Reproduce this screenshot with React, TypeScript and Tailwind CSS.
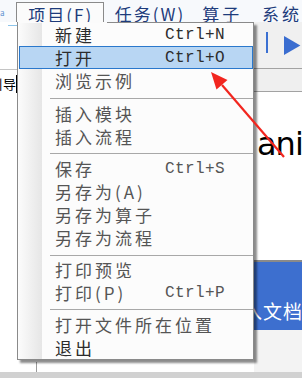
import React from "react";

const CJK = "font-['Noto_Sans_CJK_SC',sans-serif]";

type Item =
  | { kind: "item"; label: string; shortcut?: string; active?: boolean; dark?: boolean }
  | { kind: "sep"; h: number; off: number };

const ITEMS: Item[] = [
  { kind: "item", label: "新建", shortcut: "Ctrl+N", dark: true },
  { kind: "item", label: "打开", shortcut: "Ctrl+O", active: true, dark: true },
  { kind: "item", label: "浏览示例" },
  { kind: "sep", h: 10, off: 6 },
  { kind: "item", label: "插入模块" },
  { kind: "item", label: "插入流程" },
  { kind: "sep", h: 9, off: 5 },
  { kind: "item", label: "保存", shortcut: "Ctrl+S" },
  { kind: "item", label: "另存为(A)" },
  { kind: "item", label: "另存为算子" },
  { kind: "item", label: "另存为流程" },
  { kind: "sep", h: 9, off: 6 },
  { kind: "item", label: "打印预览" },
  { kind: "item", label: "打印(P)", shortcut: "Ctrl+P" },
  { kind: "sep", h: 9, off: 5 },
  { kind: "item", label: "打开文件所在位置" },
  { kind: "item", label: "退出", dark: true },
];

function MenuRow({ item }: { item: Item }) {
  if (item.kind === "sep") {
    return (
      <div style={{ height: item.h, paddingTop: item.off }}>
        <div className="ml-[32px] h-px bg-[#a8a8a8]" />
      </div>
    );
  }
  const color = item.dark ? "text-[#2c2c2c]" : "text-[#555555]";
  return (
    <div
      className={`h-[23px] flex items-center ${
        item.active ? "ml-[1px] border border-[#2a78cc] bg-[#b8d6f3]" : "ml-[1px] border border-transparent"
      }`}
    >
      <span
        className={`pl-[35px] w-[145px] shrink-0 whitespace-nowrap text-[17px] leading-none tracking-[3px] ${CJK} ${color}`}
      >
        {item.label}
      </span>
      {item.shortcut && (
        <span className={`font-['Liberation_Mono',monospace] text-[16px] leading-none tracking-[0.4px] ${color}`}>
          {item.shortcut}
        </span>
      )}
    </div>
  );
}

export default function App() {
  return (
    <div className="relative w-[302px] h-[378px] overflow-hidden bg-white">
      {/* Menu bar */}
      <div className={`h-[22px] flex items-end bg-[#f7f9fc] text-[17px] leading-none tracking-[3px] text-[#1d3b7b] ${CJK}`}>
        <div className="w-[17px] h-full relative">
          <span className="absolute left-0 top-[9px] text-[8px] text-[#5a8fd0]">a</span>
        </div>
        <div className="w-[91px] h-[20px] pl-[11px] pt-[3px] border-l border-t border-r border-[#8a8a8a] bg-[#fbfbfb] tracking-[2px]">
          项目(F)
        </div>
        <div className="w-[91px] h-[20px] pl-[11px] pt-[3px] tracking-[2px]">任务(W)</div>
        <div className="w-[62px] h-[20px] pl-[11px] pt-[3px]">算子</div>
        <div className="h-[20px] pl-[11px] pt-[3px] whitespace-nowrap">系统</div>
      </div>

      {/* Workspace behind the menu */}
      <div className="h-[350px] flex">
        <div className="w-[254px] flex flex-col bg-white">
          <div className="h-[3px]" />
          <div className="ml-[8px] w-[9px] h-px bg-[#8cc4ea]" />
          <div className="h-[43px]" />
          <div className="w-[17px] border-t border-[#c4c4c4] pt-[5px]">
            <div className="w-[17px] h-[18px] overflow-hidden flex justify-end border-r border-black">
              <span className={`text-[13px] leading-[18px] text-black whitespace-nowrap ${CJK}`}>引导</span>
            </div>
          </div>
          <div className="flex-1" />
          <div className="h-[10px] ml-[36px] w-px bg-[#9a9a9a]" />
        </div>
        <div className="w-[48px] flex flex-col">
          <div className="h-[46px] bg-[#f0f0f0] flex items-start pt-[10px]">
            <div className="ml-[12px] w-[2px] h-[21px] bg-[#3b70d2]" />
            <svg className="ml-[16px] mt-[3px]" width="20" height="22" viewBox="0 0 20 22">
              <polygon points="0,0 0,21 18,10.5" fill="#3a6dd0" />
            </svg>
          </div>
          <div className="h-[24px] border-t border-b border-[#a2a2a2] bg-[#efefef]" />
          <div className="h-[168px] bg-white overflow-visible">
            <div className="mt-[36px] ml-[3px] font-['DejaVu_Sans',sans-serif] text-[32px] leading-none tracking-[-1px] text-black">
              ani
            </div>
          </div>
          <div className="h-[70px] border-t-2 border-[#8a8a8a] bg-[#3d6fcf] overflow-visible">
            <div className={`mt-[39px] -ml-[31px] whitespace-nowrap text-[19px] leading-none tracking-[1px] text-white ${CJK}`}>
              导入文档
            </div>
          </div>
          <div className="flex-1 bg-[#f3f3f3]" />
        </div>
      </div>
      <div className="h-[6px] bg-[#d1d1d1]" />

      {/* Dropdown menu */}
      <div className="absolute left-[17px] top-[22px] w-[237px] shadow-[3px_3px_2px_rgba(0,0,0,0.45)]">
        <div className="flex h-px">
          <div className="w-px bg-[#8a8a8a]" />
          <div className="w-[89px] bg-[#fbfbfb]" />
          <div className="flex-1 bg-[#8a8a8a]" />
        </div>
        <div className="border-l border-r border-b border-[#8a8a8a] bg-[linear-gradient(to_right,#fcfcfc_0px,#e6e6e6_24px,#fcfcfc_24px)]">
          {ITEMS.map((it, i) => (
            <MenuRow key={i} item={it} />
          ))}
        </div>
      </div>

      {/* Red annotation arrow */}
      <svg className="absolute left-0 top-0 pointer-events-none" width="302" height="378" viewBox="0 0 302 378">
        <line x1="284" y1="157" x2="222" y2="85" stroke="#f2261f" strokeWidth="2.2" />
        <polygon points="211,72 216.5,89.5 227.5,80" fill="#f2261f" />
      </svg>
    </div>
  );
}
